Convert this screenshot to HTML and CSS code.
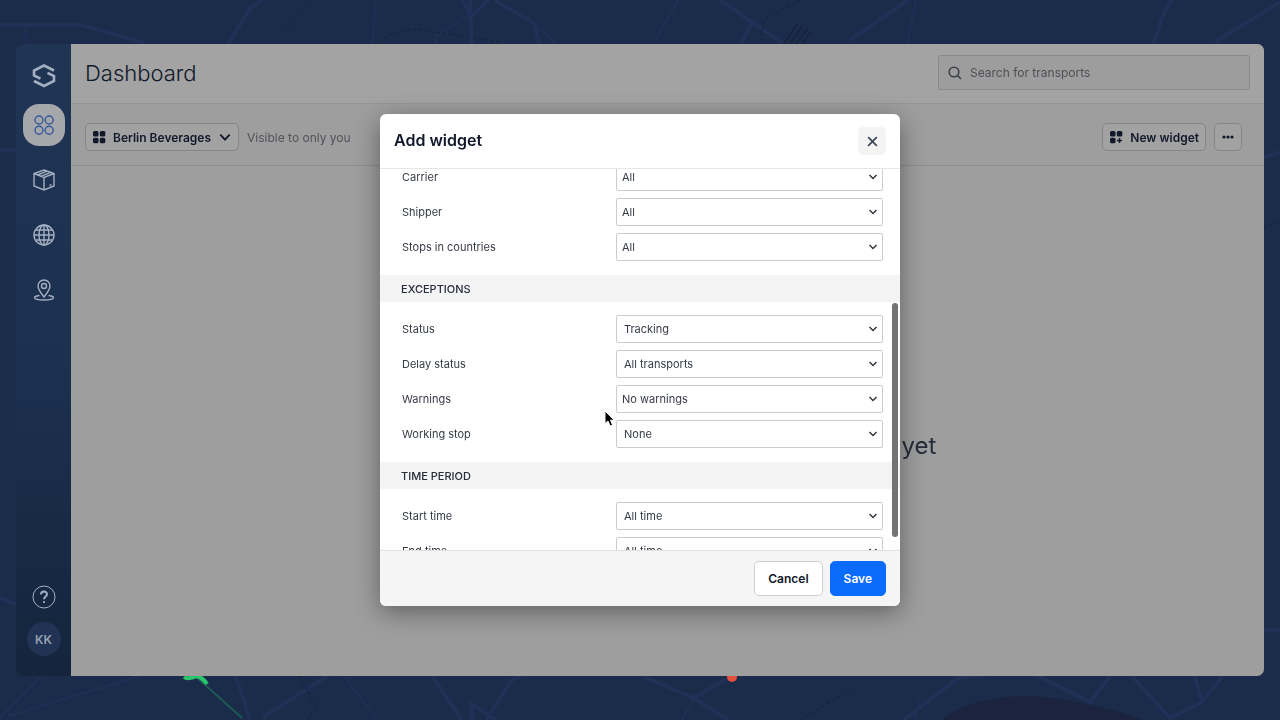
FILE: index.html
```html
<!DOCTYPE html>
<html lang="en">
<head>
<meta charset="utf-8">
<title>Dashboard</title>
<link rel="stylesheet" href="styles.css">
</head>
<body>
<svg class="map" viewBox="0 0 1280 720" preserveAspectRatio="xMidYMid slice" aria-hidden="true">
  <g class="road">
    <path d="M0 25H81L142 42V60M262 0L250 9L224 50M470 0L472 50M462 0L472 16L488 0M494 0L534 23L541 50M720 0L752 22L800 55M752 22L738 50M850 40L908 0M1172 0C1162 12 1160 25 1152 50M1280 2L1215 42M1262 158L1280 152M0 598L20 606M0 150H18M236 676L250 720M262 718L330 674M432 676L462 720M472 720V704L496 720M486 720L512 680L528 672M642 676L694 698L728 720M694 698L728 678M904 720L958 678L1006 672M1034 674L1090 702L1112 674M1130 674L1170 718L1202 702L1226 672M1202 702L1194 674M1262 630H1280"/>
  </g>
  <g class="lane">
    <path d="M25 28L27 50M376 0L372 50M470 14L436 36V50M534 23L560 48M678 0L656 40M916 0L906 50M0 718L48 670M8 716L140 676M345 678L378 720M914 720L920 700M682 720L694 698"/>
  </g>
  <g class="border">
    <path d="M308 0L284 34M380 42C395 30 415 26 434 32L500 42M800 0L764 20L760 42M300 676L316 708L308 720M850 690L800 720M1264 228L1280 222"/>
  </g>
  <g class="hatch"><path d="M784 44L797 24M790 44L802 26M796 44L808 28M802 44L811 32"/></g>
  <path class="lake" d="M942 720C970 695 1030 692 1070 701C1100 706 1125 713 1142 720Z"/>
  <path class="route" d="M196 677L212 691L242 718"/>
  <path class="start" d="M184 677Q188 680 197 676Q203 678 207 684"/>
  <circle class="stop" cx="732" cy="677" r="5"/>
</svg>

<div class="app">
  <aside class="sidebar">
    <svg class="logo" viewBox="0 0 24 24"><path d="M22 6.500L12 1.500L2 6.500V11.500L8.500 14.700M2 17L12 22L22 17V12L15.500 8.800"/></svg>
    <nav class="nav">
      <button class="nav-item active" aria-label="Dashboard"><svg viewBox="0 0 24 24"><circle cx="7" cy="7" r="4"/><circle cx="17.200" cy="7" r="4"/><circle cx="7" cy="17.200" r="4"/><circle cx="17.200" cy="17.200" r="4"/></svg></button>
      <button class="nav-item" aria-label="Transports"><svg viewBox="0 0 24 24"><path d="M12 2L22 5.500V18L12 22L2 18V5.500ZM2 5.500L12 9.500L22 5.500M12 9.500V22M5.500 7L15 3.200M9 8.400L18.500 4.400M17.500 17.500L19.500 16.700"/></svg></button>
      <button class="nav-item" aria-label="Network"><svg viewBox="0 0 24 24"><circle cx="12" cy="12" r="10"/><ellipse cx="12" cy="12" rx="5" ry="10"/><path d="M12 2V22M2 12H22M3.500 7H20.500M3.500 17H20.500"/></svg></button>
      <button class="nav-item" aria-label="Places"><svg viewBox="0 0 24 24"><path d="M12 19C8 14 6 11.500 6 8A6 6 0 0 1 18 8C18 11.500 16 14 12 19Z"/><circle cx="12" cy="8" r="2.500"/><path d="M7.500 17.500C4 18 2.500 18.700 2.500 19.500C2.500 21 7 22 12 22S21.500 21 21.500 19.500C21.500 18.700 20 18 16.500 17.500"/></svg></button>
    </nav>
    <div class="account">
      <button class="help" aria-label="Help"><svg viewBox="0 0 24 24"><circle cx="12" cy="12" r="11"/><path class="mark" d="M9 9.500C9 5.500 15 5.500 15 9.300C15 11.500 12 11.500 12 14.200M12 16.200V18"/></svg></button>
      <button class="avatar">KK</button>
    </div>
  </aside>

  <main class="main">
    <header class="header">
      <h1 class="title">Dashboard</h1>
      <div class="search">
        <svg viewBox="0 0 14 14"><circle cx="6" cy="6" r="4.800"/><path d="M9.500 9.500L13 13"/></svg>
        <input class="search-input" type="text" placeholder="Search for transports" aria-label="Search for transports">
      </div>
    </header>
    <div class="toolbar">
      <button class="tool">
        <svg class="tiles" viewBox="0 0 14 14"><rect x="1" y="1" width="5.500" height="5.500" rx="1.500"/><rect x="7.800" y="1" width="5.500" height="5.500" rx="1.500"/><rect x="1" y="7.800" width="5.500" height="5.500" rx="1.500"/><rect x="7.800" y="7.800" width="5.500" height="5.500" rx="1.500"/></svg>
        Berlin Beverages
        <svg class="caret" viewBox="0 0 12 12"><path d="M2 4L6 8.200L10 4"/></svg>
      </button>
      <span class="note">Visible to only you</span>
      <button class="tool push">
        <svg class="tiles" viewBox="0 0 14 14"><rect x="1" y="1" width="5.500" height="5.500" rx="1.500"/><rect x="7.800" y="1" width="5.500" height="5.500" rx="1.500"/><rect x="1" y="7.800" width="5.500" height="5.500" rx="1.500"/><path d="M9.800 8H11.200V9.800H13V11.200H11.200V13H9.800V11.200H8V9.800H9.800Z"/></svg>
        New widget
      </button>
      <button class="tool more" aria-label="More"><svg class="tiles" viewBox="0 0 14 14"><circle cx="3" cy="7" r="1.600"/><circle cx="7" cy="7" r="1.600"/><circle cx="11" cy="7" r="1.600"/></svg></button>
    </div>
    <section class="empty"><p class="empty-text">yet</p></section>
  </main>
</div>

<div class="overlay">
  <form class="modal" role="dialog" aria-labelledby="modal-title">
    <div class="modal-head">
      <h2 class="modal-title" id="modal-title">Add widget</h2>
      <button class="close" type="button" aria-label="Close"><svg viewBox="0 0 12 12"><path d="M2 2L10 10M10 2L2 10"/></svg></button>
    </div>
    <div class="modal-body">
      <div class="fields first">
        <div class="field"><label for="carrier">Carrier</label><select class="select near" id="carrier"><option>All</option></select></div>
        <div class="field"><label for="shipper">Shipper</label><select class="select near" id="shipper"><option>All</option></select></div>
        <div class="field"><label for="stops">Stops in countries</label><select class="select near" id="stops"><option>All</option></select></div>
      </div>
      <h3 class="band">EXCEPTIONS</h3>
      <div class="fields">
        <div class="field"><label for="status">Status</label><select class="select" id="status"><option>Tracking</option></select></div>
        <div class="field"><label for="delay">Delay status</label><select class="select" id="delay"><option>All transports</option></select></div>
        <div class="field"><label for="warnings">Warnings</label><select class="select near" id="warnings"><option>No warnings</option></select></div>
        <div class="field"><label for="working">Working stop</label><select class="select" id="working"><option>None</option></select></div>
      </div>
      <h3 class="band">TIME PERIOD</h3>
      <div class="fields">
        <div class="field"><label for="start">Start time</label><select class="select" id="start"><option>All time</option></select></div>
        <div class="field"><label for="end">End time</label><select class="select" id="end"><option>All time</option></select></div>
      </div>
      <div class="thumb"></div>
    </div>
    <div class="modal-foot">
      <button class="btn" type="button">Cancel</button>
      <button class="btn primary" type="button">Save</button>
    </div>
  </form>
</div>
<svg class="cursor" viewBox="0 0 12 18" aria-hidden="true"><path d="M1 1V13.500L4 11L6.200 16L8.600 15L6.500 10.200H10.300Z"/></svg>
</body>
</html>
```

FILE: styles.css
```css
* { box-sizing: border-box; }

body {
  margin: 0;
  min-height: 100vh;
  display: flex;
  padding: 44px 16px;
  overflow: hidden;
  background: #1b2b4a;
  font-family: Inter, "Liberation Sans", sans-serif;
  font-size: 12px;
  color: #10182a;
}

h1, h2, h3, p { margin: 0; font-weight: inherit; }
button, input, select { font: inherit; color: inherit; margin: 0; }
button { padding: 0; border: 0; background: none; }
svg { display: block; fill: none; stroke: currentColor; }

.map { position: fixed; inset: 0; width: 100%; height: 100%; }
.road { stroke: #203056; stroke-width: 4; }
.lane { stroke: #203055; stroke-width: 2; }
.border { stroke: #15213a; stroke-width: 1; stroke-dasharray: 3 3; }
.hatch { stroke: #18243f; stroke-width: 2; }
.lake { fill: #1b233e; stroke: none; }
.route { stroke: #1c5a55; stroke-width: 2; }
.start { stroke: #2cc56c; stroke-width: 4; }
.stop { fill: #e2503c; stroke: none; }

.app {
  position: relative;
  flex: 1;
  display: flex;
  border-radius: 7px;
  overflow: hidden;
}

.sidebar {
  width: 55px;
  flex: none;
  display: flex;
  flex-direction: column;
  align-items: center;
  padding: 20px 0;
  background: linear-gradient(#203454, #1c3050 50%, #14253c);
  color: #a4b0c2;
}
.logo { width: 24px; height: 24px; stroke-width: 2.6; }
.nav { display: flex; flex-direction: column; gap: 13px; margin-top: 16px; }
.nav-item {
  width: 42px;
  height: 42px;
  display: grid;
  place-items: center;
  border-radius: 16px;
}
.nav-item svg { width: 24px; height: 24px; stroke-width: 1.4; }
.nav-item.active { background: #a6a7aa; color: #34589c; }
.account {
  margin-top: auto;
  display: flex;
  flex-direction: column;
  align-items: center;
  gap: 13px;
}
.help svg { width: 24px; height: 24px; }
.mark { stroke-width: 2; }
.avatar {
  width: 34px;
  height: 34px;
  border-radius: 50%;
  background: #203354;
  color: #99a2b2;
  font-weight: 600;
}

.main {
  flex: 1;
  display: flex;
  flex-direction: column;
  background: #9e9e9e;
}
.header {
  height: 60px;
  display: flex;
  align-items: center;
  justify-content: space-between;
  padding: 0 14px 2px;
  background: #a3a3a3;
  border-bottom: 1px solid #969696;
}
.title { font-size: 22px; line-height: 28px; font-weight: 300; }
.search {
  width: 312px;
  height: 35px;
  display: flex;
  align-items: center;
  gap: 8px;
  padding: 0 9px;
  border: 1px solid #888b90;
  border-radius: 2px;
  background: #9d9d9d;
  color: #3c4048;
}
.search svg { width: 14px; height: 14px; stroke-width: 1.6; }
.search-input {
  flex: 1;
  min-width: 0;
  padding: 0;
  border: 0;
  outline: 0;
  background: none;
}
.search-input::placeholder { color: #4c5057; opacity: 1; }

.toolbar {
  display: flex;
  align-items: center;
  gap: 8px;
  padding: 19px 22px 14px 14px;
  border-bottom: 1px solid #8f8f8f;
}
.tool {
  height: 28px;
  display: flex;
  align-items: center;
  gap: 7px;
  padding: 0 6px;
  border: 1px solid #838589;
  border-radius: 5px;
  background: #a2a2a2;
  font-weight: 600;
}
.push { margin-left: auto; }
.more { width: 28px; }
.tiles { width: 14px; height: 14px; fill: currentColor; stroke: none; }
.caret { width: 14px; height: 14px; stroke-width: 1.6; }
.note { color: #505359; }

.empty { flex: 1; padding: 264px 0 0 calc(50% + 234px); }
.empty-text { font-size: 24px; line-height: 32px; color: #252c3a; }

.overlay {
  position: fixed;
  inset: 0;
  display: grid;
  place-items: center;
}
.modal {
  width: 520px;
  height: calc(100vh - 228px);
  display: flex;
  flex-direction: column;
  border-radius: 6px;
  overflow: hidden;
  background: #fff;
  box-shadow: 0 6px 26px rgba(0, 0, 0, .4);
}
.modal-head {
  height: 55px;
  flex: none;
  display: flex;
  align-items: center;
  justify-content: space-between;
  padding: 0 14px;
  border-bottom: 1px solid #e6e6e6;
}
.modal-title { padding-bottom: 3px; font-size: 16px; line-height: 24px; font-weight: 600; }
.close {
  width: 28px;
  height: 28px;
  display: grid;
  place-items: center;
  border-radius: 5px;
  background: #f4f4f5;
  color: #3b4256;
}
.close svg { width: 13px; height: 13px; stroke-width: 1.5; }

.modal-body { position: relative; flex: 1; min-height: 0; overflow: hidden; }
.fields { display: grid; gap: 7px; padding: 13px 17px 14px 22px; }
.fields.first { padding-top: 0; margin-top: -6px; }
.field {
  display: grid;
  grid-template-columns: 1fr 267px;
  align-items: center;
  font-size: 11px;
  line-height: 18px;
  color: #363c47;
}
.field label { padding-bottom: 1px; }
.select {
  width: 100%;
  height: 28px;
  padding: 0 24px 0 7px;
  border: 1px solid #cbccd0;
  border-radius: 2px;
  appearance: none;
  background: #fff url("data:image/svg+xml,%3Csvg xmlns='http://www.w3.org/2000/svg' width='10' height='10' fill='none' stroke='%23333841' stroke-width='1.5'%3E%3Cpath d='M1.500 3L5 6.500L8.500 3'/%3E%3C/svg%3E") no-repeat right 4px center;
}
.select.near { padding-left: 5px; }
.band {
  padding: 1px 21px 0;
  line-height: 26px;
  font-size: 11px;
  font-weight: 500;
  background: #f4f4f5;
  color: #262c3a;
}
.thumb {
  position: absolute;
  top: 134px;
  right: 2px;
  bottom: 13px;
  width: 6px;
  border-radius: 3px;
  background: #737373;
}
.modal-foot {
  height: 56px;
  flex: none;
  display: flex;
  align-items: center;
  justify-content: flex-end;
  gap: 7px;
  padding: 0 14px 1px;
  border-top: 1px solid #e2e2e2;
  background: #f5f5f5;
}
.btn {
  height: 35px;
  padding: 0 13px;
  border: 1px solid #cfd0d3;
  border-radius: 5px;
  background: #fff;
  font-weight: 600;
}
.btn.primary { border-color: #0b6bfa; background: #0b6bfa; color: #fff; }

.cursor {
  position: fixed;
  left: 604px;
  top: 410px;
  width: 12px;
  height: 18px;
  fill: #000;
  stroke: #fff;
}
```
